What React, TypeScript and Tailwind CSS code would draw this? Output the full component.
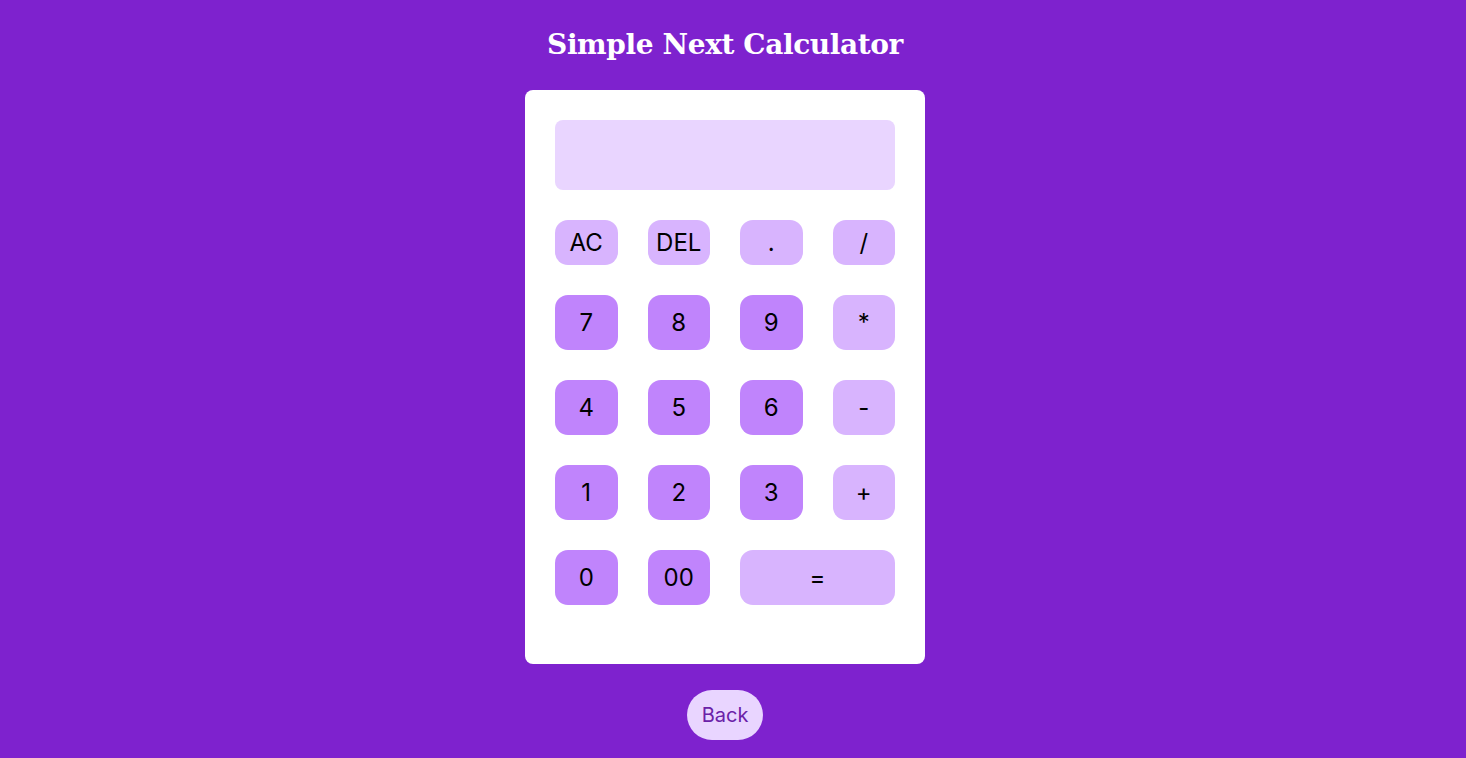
import React, { useState } from 'react';

const keys: { label: string; kind: 'top' | 'num' | 'op'; wide?: boolean }[] = [
  { label: 'AC', kind: 'top' },
  { label: 'DEL', kind: 'top' },
  { label: '.', kind: 'top' },
  { label: '/', kind: 'top' },
  { label: '7', kind: 'num' },
  { label: '8', kind: 'num' },
  { label: '9', kind: 'num' },
  { label: '*', kind: 'op' },
  { label: '4', kind: 'num' },
  { label: '5', kind: 'num' },
  { label: '6', kind: 'num' },
  { label: '-', kind: 'op' },
  { label: '1', kind: 'num' },
  { label: '2', kind: 'num' },
  { label: '3', kind: 'num' },
  { label: '+', kind: 'op' },
  { label: '0', kind: 'num' },
  { label: '00', kind: 'num' },
  { label: '=', kind: 'op', wide: true },
];

const App: React.FC = () => {
  const [display, setDisplay] = useState('');

  const press = (label: string) => {
    if (label === 'AC') return setDisplay('');
    if (label === 'DEL') return setDisplay(display.slice(0, -1));
    if (label === '=') {
      try {
        // eslint-disable-next-line no-new-func
        setDisplay(String(Function(`return (${display})`)()));
      } catch {
        setDisplay('Error');
      }
      return;
    }
    setDisplay(display + label);
  };

  return (
    <div className="min-h-screen bg-[#7e22ce] flex flex-col items-center pt-[27px] pr-4 font-['Inter',sans-serif]">
      <h1 className="text-[28px] leading-9 font-bold text-white font-['DejaVu_Serif',Georgia,serif] tracking-[-0.4px]">
        Simple Next Calculator
      </h1>

      {/* Calculator card */}
      <div className="mt-[27px] w-[400px] bg-white rounded-lg px-[30px] pt-[30px] pb-[59px]">
        <div className="h-[70px] bg-[#e9d5ff] rounded-lg flex items-center justify-end px-4 text-3xl text-black">
          {display}
        </div>

        <div className="mt-[30px] grid grid-cols-4 gap-[30px]">
          {keys.map((k) => (
            <button
              key={k.label}
              onClick={() => press(k.label)}
              className={`${k.kind === 'top' ? 'h-[45px]' : 'h-[55px]'} ${
                k.wide ? 'col-span-2' : ''
              } ${k.kind === 'num' ? 'bg-[#c084fc]' : 'bg-[#d8b4fe]'} rounded-[13px] text-2xl text-black flex items-center justify-center`}
            >
              {k.label}
            </button>
          ))}
        </div>
      </div>

      <button className="mt-[26px] w-[76px] h-[50px] rounded-full bg-[#e9d5ff] text-[#6b21a8] text-xl">
        Back
      </button>
    </div>
  );
};

export default App;
